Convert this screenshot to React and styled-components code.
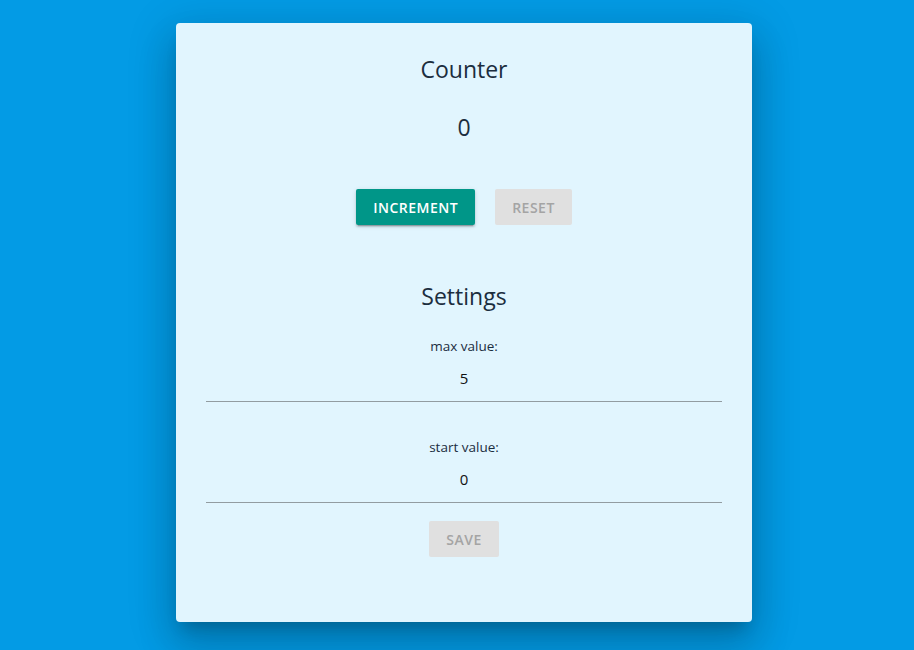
import React, { useState } from 'react';
import styled, { createGlobalStyle } from 'styled-components';

const GlobalStyle = createGlobalStyle`
  html, body {
    margin: 0;
    padding: 0;
    background: #039be5;
    font-family: 'Open Sans', 'Noto Sans', sans-serif;
  }
`;

const Page = styled.div`
  min-height: 650px;
  display: flex;
  justify-content: center;
  align-items: flex-start;
  padding: 23px 0 0 14px;
  box-sizing: border-box;
`;

const Card = styled.div`
  width: 576px;
  height: 599px;
  box-sizing: border-box;
  padding: 30px 30px 0;
  background: #e1f5fe;
  border-radius: 4px;
  box-shadow: 0px 11px 15px -7px rgba(0, 0, 0, 0.2),
    0px 24px 38px 3px rgba(0, 0, 0, 0.14), 0px 9px 46px 8px rgba(0, 0, 0, 0.12);
  display: flex;
  flex-direction: column;
  align-items: center;
  color: #1b2d3e;
`;

const Title = styled.h2`
  margin: ${({ $top }) => $top || 0}px 0 0;
  font-size: 23px;
  font-weight: 400;
  line-height: 32px;
`;

const Value = styled.div`
  margin-top: 26px;
  font-size: 23px;
  line-height: 32px;
`;

const ButtonRow = styled.div`
  display: flex;
  gap: 20px;
  margin-top: 46px;
`;

const Button = styled.button`
  height: 36px;
  padding: 0 17px;
  border: none;
  border-radius: 2px;
  font-family: inherit;
  font-size: 14px;
  font-weight: 600;
  letter-spacing: 0.5px;
  text-transform: uppercase;
  cursor: pointer;
  background: ${({ disabled }) => (disabled ? '#e0e0e0' : '#009688')};
  color: ${({ disabled }) => (disabled ? '#a4a4a4' : '#ffffff')};
  box-shadow: ${({ disabled }) =>
    disabled
      ? 'none'
      : '0px 3px 1px -2px rgba(0,0,0,0.2), 0px 2px 2px 0px rgba(0,0,0,0.14), 0px 1px 5px 0px rgba(0,0,0,0.12)'};
`;

const Label = styled.label`
  margin-top: ${({ $top }) => $top}px;
  font-size: 13.5px;
  line-height: 20px;
`;

const Field = styled.input`
  width: 100%;
  margin-top: 10px;
  padding: 0 0 11px;
  border: none;
  border-bottom: 1px solid #929ca1;
  background: transparent;
  font-family: inherit;
  font-size: 15px;
  line-height: 24px;
  color: #111;
  text-align: center;
  outline: none;
`;

const SaveButton = styled(Button)`
  margin-top: 18px;
`;

export default function App() {
  const [count, setCount] = useState(0);
  const [max, setMax] = useState('5');
  const [start, setStart] = useState('0');

  return (
    <>
      <GlobalStyle />
      <Page>
        <Card>
          <Title>Counter</Title>
          <Value>{count}</Value>
          <ButtonRow>
            <Button onClick={() => setCount(count + 1)}>Increment</Button>
            <Button disabled>Reset</Button>
          </ButtonRow>
          <Title $top={55}>Settings</Title>
          <Label $top={24}>max value:</Label>
          <Field value={max} onChange={e => setMax(e.target.value)} />
          <Label $top={35}>start value:</Label>
          <Field value={start} onChange={e => setStart(e.target.value)} />
          <SaveButton disabled>Save</SaveButton>
        </Card>
      </Page>
    </>
  );
}
